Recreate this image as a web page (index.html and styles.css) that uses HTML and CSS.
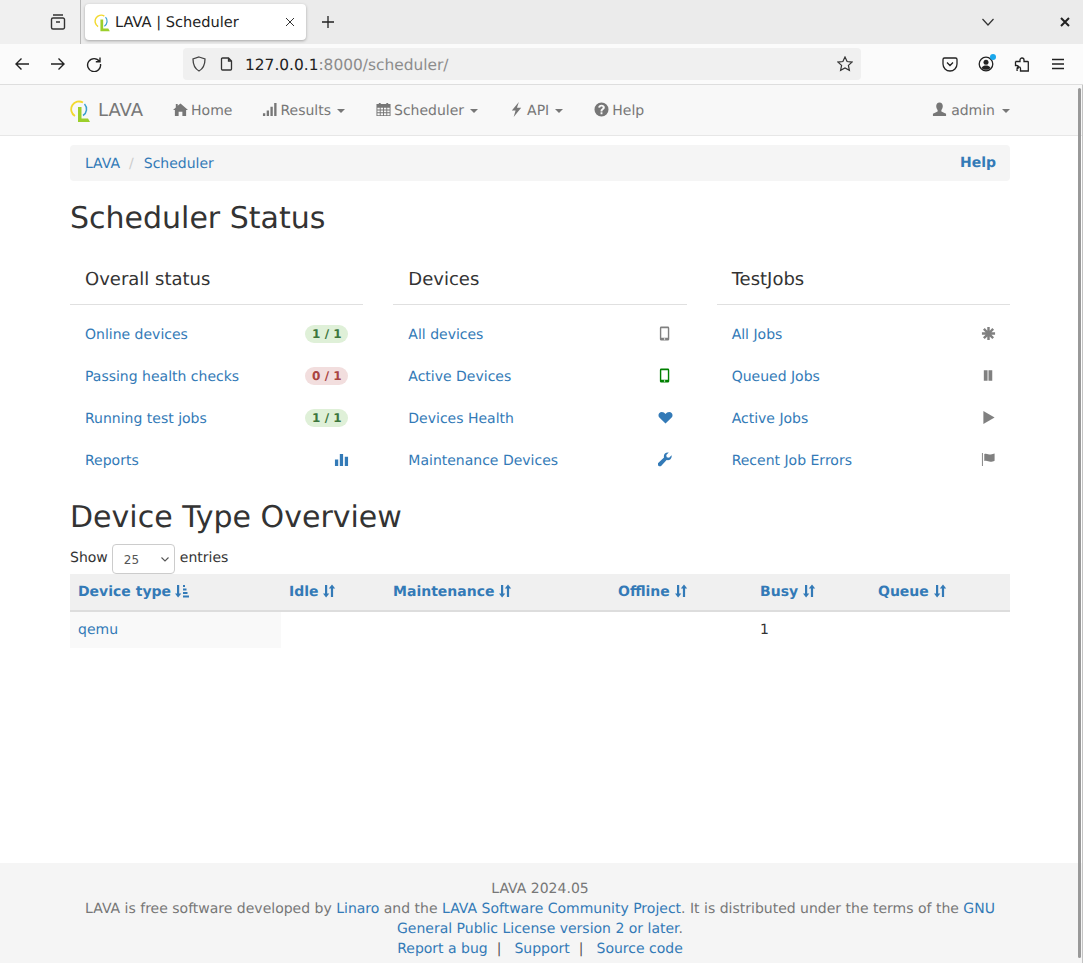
FILE: index.html
```html
<!DOCTYPE html>
<html lang="en">
<head>
  <meta charset="UTF-8" />
  <meta name="viewport" content="width=device-width, initial-scale=1.0"/>
  <title>LAVA | Scheduler</title>
  <link rel="stylesheet" href="styles.css">
</head>
<body>

  <svg class="sprite" width="0" height="0">
    <symbol id="i-logo" viewBox="0 0 20 23">
      <path d="M5 16A7.500 7.500 0 0 1 13 2.600" fill="none" stroke="#f2d92e" stroke-width="1.800"/>
      <path d="M14.500 4A7.500 7.500 0 0 1 13 15.500" fill="none" stroke="#39a0cf" stroke-width="1.500"/>
      <path d="M8 7H11.500V18.500H18L20 22H8z" fill="#9ccf2b"/>
    </symbol>
    <symbol id="i-home" viewBox="0 0 16 16"><path d="M8 1.500 16 8.500h-2V15h-4v-4.500H6V15H2V8.500H0L3 5.900V2h2v2.100z"/></symbol>
    <symbol id="i-signal" viewBox="0 0 16 16"><path d="M1 12h2.500v3H1zM5 9h2.500v6H5zM9 5h2.500v10H9zM13 1h2.500v14H13z"/></symbol>
    <symbol id="i-calendar" viewBox="0 0 16 16"><path d="M3 1h2v1h6V1h2v1h2.500v13H.5V2H3zM1.500 6v2h2.500V6zm3.500 0v2h2.500V6zm3.500 0v2H11V6zM12 6v2h2.500V6zM1.500 9v2h2.500V9zM5 9v2h2.500V9zm3.500 0v2H11V9zM12 9v2h2.500V9zm-10.500 3v2h2.500v-2zm3.500 0v2h2.500v-2zm3.500 0v2H11v-2zm3.500 0v2h2.500v-2z" fill-rule="evenodd"/></symbol>
    <symbol id="i-flash" viewBox="0 0 16 16"><path d="M10.500 0 3 9h4l-2 7 8-10H8.500z"/></symbol>
    <symbol id="i-question" viewBox="0 0 16 16"><path fill-rule="evenodd" d="M8 .5a7.500 7.500 0 1 1 0 15 7.500 7.500 0 0 1 0-15zM7 11v2h2v-2zM8 3C6 3 4.700 4 4.500 5.800l2 .3C6.700 5.300 7.200 4.900 8 4.900c.7 0 1.300.4 1.300 1 0 .5-.3.800-1 1.300C7.300 8 7 8.500 7 10h2c0-.9.200-1.200 1-1.800 1-.7 1.500-1.400 1.500-2.400C11.500 4.100 10 3 8 3z"/></symbol>
    <symbol id="i-user" viewBox="0 0 16 16"><path d="M8 .5c2.200 0 3.500 1.600 3.500 3.800 0 1.700-.7 3.200-1.500 4.200v1.500l5 2.500V15H1v-2.500l5-2.500V8.500C5.200 7.500 4.500 6 4.500 4.300 4.500 2.100 5.800.5 8 .5z"/></symbol>
    <symbol id="i-phone" viewBox="0 0 16 16"><path fill-rule="evenodd" d="M3.500.5h7A1.500 1.500 0 0 1 12 2v12a1.500 1.500 0 0 1-1.500 1.500h-7A1.500 1.500 0 0 1 2 14V2A1.500 1.500 0 0 1 3.500.5zM3.500 2.500v10h7v-10zM7 13a.8.800 0 1 0 0 1.600A.8.800 0 0 0 7 13z"/></symbol>
    <symbol id="i-heart" viewBox="0 0 16 16"><path d="M8 14.500 1.700 8.300C.9 7.500.5 6.500.5 5.500c0-2 1.500-3.500 3.500-3.500 1.700 0 3 .9 4 2.300C9 2.900 10.300 2 12 2c2 0 3.500 1.500 3.500 3.500 0 1-.4 2-1.200 2.800z"/></symbol>
    <symbol id="i-wrench" viewBox="0 0 16 16"><path d="M14.500 3.500c.3 1.500-.1 3-1.200 4.100-1.100 1.100-2.700 1.400-4.100 1L3.300 14.800c-.7.700-1.900.7-2.600 0l-.5-.5c-.7-.7-.7-1.900 0-2.600L6.400 5.800c-.4-1.400-.1-3 1-4.100C8.500.6 10 .2 11.500.5L8.800 3.200l.5 2.500 2.500.5z"/></symbol>
    <symbol id="i-asterisk" viewBox="0 0 16 16"><path d="M6.700 1h2.600v4l2.800-2.800L13.900 4l-2.800 2.700H15v2.600h-3.900l2.800 2.800-1.800 1.800-2.800-2.800V15H6.700v-3.900L4 13.900l-1.900-1.800 2.800-2.800H1V6.700h3.900L2.100 4 4 2.200l2.700 2.800z"/></symbol>
    <symbol id="i-pause" viewBox="0 0 16 16"><path d="M3 2.500h4v11H3zM8 2.500h4v11H8z"/></symbol>
    <symbol id="i-play" viewBox="0 0 16 16"><path d="M2.500 1 14.500 8l-12 7z"/></symbol>
    <symbol id="i-flag" viewBox="0 0 16 16"><path d="M1 1h1v14H1zM3.500 2c3-.9 4.500.9 7 .6 1.500-.1 2.700-.3 4-.9v7.500c-1.500.8-2.800 1-4.200 1.100-2.500.2-3.800-1.500-6.800-.6z"/></symbol>
    <symbol id="i-stats" viewBox="0 0 16 16"><path d="M1 8h3.500v7H1zM6.200 2h3.500v13H6.200zM11.500 5H15v10h-3.500z"/></symbol>
    <symbol id="i-sort" viewBox="0 0 14 14"><path d="M3 1h2.200v8.500H7.300L4.100 13.500 1 9.500H3zM10 .5 13.200 4.500H11.100V13H8.900V4.500H6.800z"/></symbol>
    <symbol id="i-sort-asc" viewBox="0 0 14 14"><path d="M2 1h2.200v8.500H6.300L3.100 13.500 0 9.500H2zM8 1h2v2H8zM8 4.500h3.500v2H8zM8 8h4.500v2H8zM8 11.500h6V13.500H8z"/></symbol>
  </svg>

  <div class="tabbar">
    <div class="tab-left">
      <svg class="bar-icon" width="18" height="18" viewBox="0 0 18 18" fill="none" stroke="#333" stroke-width="1.400"><path d="M4 2h10M2.500 6.500a1.500 1.500 0 0 1 1.500-1.500h10a1.500 1.500 0 0 1 1.500 1.500v8a1.500 1.500 0 0 1-1.500 1.500H4a1.500 1.500 0 0 1-1.500-1.500zM7 9h4"/></svg>
    </div>
    <div class="tab">
      <svg class="tab-favicon"><use href="#i-logo"/></svg>
      <span class="tab-title">LAVA | Scheduler</span>
      <svg class="tab-x" width="10" height="10" viewBox="0 0 10 10" stroke="#333" stroke-width="1"><path d="M1 1l8 8M9 1l-8 8"/></svg>
    </div>
    <svg class="tab-new" width="14" height="14" viewBox="0 0 14 14" stroke="#222" stroke-width="1.300"><path d="M7 1v12M1 7h12"/></svg>
    <div class="tabbar-space"></div>
    <svg class="tab-down" width="14" height="14" viewBox="0 0 14 14" fill="none" stroke="#333" stroke-width="1.200"><path d="M1.500 4 7 10l5.500-6"/></svg>
    <svg class="win-close" width="10" height="10" viewBox="0 0 10 10" stroke="#222" stroke-width="2"><path d="M1 1l8 8M9 1l-8 8"/></svg>
  </div>

  <div class="toolbar">
    <svg class="tool-btn" width="16" height="16" viewBox="0 0 16 16" fill="none" stroke="#222" stroke-width="1.400"><path d="M15 8H2M7.500 2.500 2 8l5.500 5.500"/></svg>
    <svg class="tool-btn" width="16" height="16" viewBox="0 0 16 16" fill="none" stroke="#222" stroke-width="1.400"><path d="M1 8h13M8.500 2.500 14 8l-5.500 5.500"/></svg>
    <svg class="tool-btn" width="16" height="16" viewBox="0 0 16 16" fill="none" stroke="#222" stroke-width="1.400"><path d="M13.500 5.500A6.500 6.500 0 1 0 14.500 8M14 1.500v4.200H9.800"/></svg>
    <div class="urlbar">
      <svg class="url-shield" width="16" height="16" viewBox="0 0 16 16" fill="none" stroke="#444" stroke-width="1.300"><path d="M8 1 14 3c0 6-1.500 9.500-6 12C3.500 12.500 2 9 2 3z"/></svg>
      <svg class="url-page" width="14" height="14" viewBox="0 0 14 14" fill="none" stroke="#333" stroke-width="1.300"><path d="M2.500 1h6l3 3v8a1 1 0 0 1-1 1h-8a1 1 0 0 1-1-1V2a1 1 0 0 1 1-1zM8.500 1v3h3"/></svg>
      <span class="url-text"><span class="url-host">127.0.0.1</span>:8000/scheduler/</span>
      <svg class="url-star" width="16" height="16" viewBox="0 0 16 16" fill="none" stroke="#333" stroke-width="1.200"><path d="M8 1l2.100 4.500 4.900.6-3.600 3.300 1 4.900L8 11.900l-4.400 2.400 1-4.900L1 6.100l4.900-.6z"/></svg>
    </div>
    <div class="tool-right">
      <svg width="16" height="16" viewBox="0 0 16 16" fill="none" stroke="#222" stroke-width="1.300"><path d="M2.500 2h11A1.500 1.500 0 0 1 15 3.500V8A7 7 0 0 1 1 8V3.500A1.500 1.500 0 0 1 2.500 2zM5 6.500 8 9.500l3-3"/></svg>
      <span class="account">
        <svg width="16" height="16" viewBox="0 0 16 16"><circle cx="8" cy="8" r="6.800" fill="none" stroke="#222" stroke-width="1.300"/><circle cx="8" cy="6.300" r="2.500" fill="#222"/><path d="M3.500 12c1-2 2.800-2.500 4.500-2.500s3.500.5 4.500 2.500c-1.200 1.200-2.800 1.800-4.500 1.800S4.700 13.200 3.500 12z" fill="#222"/></svg>
        <span class="account-dot"></span>
      </span>
      <svg width="16" height="16" viewBox="0 0 16 16" fill="none" stroke="#222" stroke-width="1.300"><path d="M1.500 5.500H6V4a2 2 0 1 1 4 0v1.500h3.500c.5 0 .8.300.8.800V15H6.500v-2.500a1.700 1.700 0 0 0-3.400 0V15M1.500 5.500v4h1.200a1.700 1.700 0 0 1 0 3.400"/></svg>
      <svg width="16" height="16" viewBox="0 0 16 16" stroke="#222" stroke-width="1.300"><path d="M2 3.500h12M2 8h12M2 12.500h12"/></svg>
    </div>
  </div>

  <div class="page">
    <nav class="navbar">
      <div class="container nav-inner">
        <a class="brand"><svg class="brand-logo"><use href="#i-logo"/></svg>LAVA</a>
        <a class="nav-link"><svg class="gi"><use href="#i-home"/></svg>Home</a>
        <a class="nav-link"><svg class="gi"><use href="#i-signal"/></svg>Results<span class="caret"></span></a>
        <a class="nav-link"><svg class="gi"><use href="#i-calendar"/></svg>Scheduler<span class="caret"></span></a>
        <a class="nav-link"><svg class="gi"><use href="#i-flash"/></svg>API<span class="caret"></span></a>
        <a class="nav-link"><svg class="gi"><use href="#i-question"/></svg>Help</a>
        <a class="nav-link nav-user"><svg class="gi"><use href="#i-user"/></svg>admin<span class="caret"></span></a>
      </div>
    </nav>

    <main class="container content">
      <div class="breadcrumb">
        <a>LAVA</a><span class="crumb-sep">/</span><a>Scheduler</a>
        <a class="crumb-help">Help</a>
      </div>

      <h1>Scheduler Status</h1>

      <div class="panels">
        <section class="panel">
          <h4>Overall status</h4>
          <a class="row">Online devices<span class="pill pill-ok">1 / 1</span></a>
          <a class="row">Passing health checks<span class="pill pill-bad">0 / 1</span></a>
          <a class="row">Running test jobs<span class="pill pill-ok">1 / 1</span></a>
          <a class="row">Reports<svg class="row-icon blue"><use href="#i-stats"/></svg></a>
        </section>
        <section class="panel">
          <h4>Devices</h4>
          <a class="row">All devices<svg class="row-icon gray"><use href="#i-phone"/></svg></a>
          <a class="row">Active Devices<svg class="row-icon green"><use href="#i-phone"/></svg></a>
          <a class="row">Devices Health<svg class="row-icon blue"><use href="#i-heart"/></svg></a>
          <a class="row">Maintenance Devices<svg class="row-icon blue"><use href="#i-wrench"/></svg></a>
        </section>
        <section class="panel">
          <h4>TestJobs</h4>
          <a class="row">All Jobs<svg class="row-icon gray"><use href="#i-asterisk"/></svg></a>
          <a class="row">Queued Jobs<svg class="row-icon gray"><use href="#i-pause"/></svg></a>
          <a class="row">Active Jobs<svg class="row-icon gray"><use href="#i-play"/></svg></a>
          <a class="row">Recent Job Errors<svg class="row-icon gray"><use href="#i-flag"/></svg></a>
        </section>
      </div>

      <h1 class="overview">Device Type Overview</h1>

      <div class="length">
        Show
        <span class="select-wrap">
          <select class="length-select"><option>25</option></select>
          <svg class="select-arrow" width="8" height="5" viewBox="0 0 8 5" fill="none" stroke="#555" stroke-width="1.100"><path d="M.5.500 4 4 7.500.500"/></svg>
        </span>
        entries
      </div>

      <table class="table">
        <colgroup>
          <col class="col-type"><col class="col-idle"><col class="col-maint"><col class="col-off"><col class="col-busy"><col class="col-queue">
        </colgroup>
        <thead>
          <tr>
            <th>Device type <svg class="sort"><use href="#i-sort-asc"/></svg></th>
            <th>Idle <svg class="sort"><use href="#i-sort"/></svg></th>
            <th>Maintenance <svg class="sort"><use href="#i-sort"/></svg></th>
            <th>Offline <svg class="sort"><use href="#i-sort"/></svg></th>
            <th>Busy <svg class="sort"><use href="#i-sort"/></svg></th>
            <th>Queue <svg class="sort"><use href="#i-sort"/></svg></th>
          </tr>
        </thead>
        <tbody>
          <tr>
            <td class="sorted"><a>qemu</a></td>
            <td></td>
            <td></td>
            <td></td>
            <td>1</td>
            <td></td>
          </tr>
        </tbody>
      </table>
    </main>

    <footer>
      <div class="container">
        LAVA 2024.05<br>
        LAVA is free software developed by <a>Linaro</a> and the <a>LAVA Software Community Project</a>. It is distributed under the terms of the <a>GNU General Public License version 2 or later</a>.<br>
        <a>Report a bug</a><span class="foot-sep">|</span><a>Support</a><span class="foot-sep">|</span><a>Source code</a>
      </div>
    </footer>

    <div class="scrollbar"></div>
  </div>

</body>
</html>
```

FILE: styles.css
```css
html, body {
  height: 100%;
}

body {
  margin: 0;
  height: 100vh;
  overflow: hidden;
  display: flex;
  flex-direction: column;
  background: #fff;
  color: #333;
  font-family: "DejaVu Sans", sans-serif;
  font-size: 14px;
  line-height: 20px;
  text-rendering: geometricPrecision;
}

a {
  color: #337ab7;
  text-decoration: none;
}

.sprite {
  position: absolute;
}

/* browser chrome */
.tabbar {
  height: 44px;
  flex: none;
  display: flex;
  align-items: center;
  background: #ebebeb;
}

.tab-left {
  width: 81px;
  height: 44px;
  flex: none;
  display: flex;
  align-items: center;
  justify-content: flex-end;
  padding-right: 13px;
  box-sizing: border-box;
  border-right: 1px solid #b8b8b8;
  background: #f0f0f0;
}

.tab {
  width: 221px;
  height: 36px;
  margin-left: 4px;
  margin-top: -1px;
  padding: 2px 11px 0 9px;
  box-sizing: border-box;
  display: flex;
  align-items: center;
  background: #fff;
  border-radius: 4px;
  box-shadow: 0 1px 3px rgba(0, 0, 0, 0.3);
  color: #222;
  font-size: 14.600px;
}

.tab-favicon {
  width: 16px;
  height: 18px;
  flex: none;
  margin-right: 5px;
}

.tab-x {
  margin-top: -2px;
}

.tab-title {
  flex: 1;
}

.tab-new {
  margin-left: 15px;
}

.tabbar-space {
  flex: 1;
}

.tab-down {
  margin-right: 65px;
}

.win-close {
  margin-right: 13px;
}

.toolbar {
  height: 40px;
  flex: none;
  display: flex;
  align-items: center;
  padding-left: 14px;
  background: #fbfbfb;
  border-bottom: 1px solid #dedede;
}

.tool-btn {
  margin-right: 20px;
  flex: none;
}

.urlbar {
  width: 678px;
  height: 32px;
  margin-left: 61px;
  padding: 0 8px;
  box-sizing: border-box;
  display: flex;
  align-items: center;
  background: #f0f0f0;
  border-radius: 4px;
  font-size: 15.400px;
  color: #8c8c8c;
}

.url-shield {
  margin-right: 13px;
}

.url-page {
  margin-right: 11px;
}

.url-text {
  flex: 1;
  padding-top: 1px;
}

.url-host {
  color: #222;
}

.tool-right {
  margin-left: 81px;
  display: flex;
  align-items: center;
  gap: 20px;
}

.account {
  position: relative;
  display: flex;
}

.account-dot {
  position: absolute;
  top: -2px;
  right: -2px;
  width: 6px;
  height: 6px;
  border-radius: 50%;
  background: #1aa7ec;
}

/* page */
.page {
  flex: 1;
  display: flex;
  flex-direction: column;
  position: relative;
  min-height: 0;
}

.container {
  width: 940px;
  margin: 0 auto;
  position: relative;
  left: -1.500px;
}

.navbar {
  height: 50px;
  flex: none;
  background: #f8f8f8;
  border-bottom: 1px solid #e7e7e7;
  box-sizing: content-box;
}

.nav-inner {
  height: 50px;
  padding-top: 2px;
  box-sizing: border-box;
  display: flex;
  align-items: center;
  color: #777;
}

.brand {
  display: flex;
  align-items: center;
  color: #777;
  font-size: 18px;
  margin-right: 30px;
}

.brand-logo {
  width: 20px;
  height: 23px;
  margin-right: 8px;
  margin-top: 1px;
}

.nav-link {
  display: flex;
  align-items: center;
  color: #777;
  margin-right: 30px;
}

.nav-user {
  margin-left: auto;
  margin-right: 0;
}

.gi {
  width: 15px;
  height: 15px;
  fill: #777;
  margin: -3px 3px 0 0;
  flex: none;
}

.nav-user .gi {
  margin-right: 4px;
}

.caret {
  width: 0;
  height: 0;
  margin: 0 1px 0 6px;
  border-top: 4px solid #777;
  border-left: 4px solid transparent;
  border-right: 4px solid transparent;
}

.nav-user .caret {
  margin: 0 0 0 7px;
}

.content {
  flex: 1;
  min-height: 0;
}

.breadcrumb {
  height: 36px;
  margin-top: 9px;
  padding: 2px 14px 0 15px;
  box-sizing: border-box;
  display: flex;
  align-items: center;
  background: #f5f5f5;
  border-radius: 4px;
}

.crumb-sep {
  color: #ccc;
  padding: 0 10px 0 9px;
}

.crumb-help {
  margin-left: auto;
  margin-bottom: 2px;
  font-weight: bold;
}

h1 {
  margin: 20px 0 0;
  padding-top: 1px;
  font-size: 30px;
  font-weight: 400;
  line-height: 33px;
}

.panels {
  display: grid;
  grid-template-columns: repeat(3, 1fr);
  gap: 30px;
  margin-top: 34px;
}

h4 {
  margin: 0 0 8px;
  padding: 1px 15px 14px;
  font-size: 18px;
  font-weight: 400;
  line-height: 20px;
  border-bottom: 1px solid #e0e0e0;
}

.row {
  height: 42px;
  padding: 2px 15px 0;
  box-sizing: border-box;
  display: flex;
  align-items: center;
  justify-content: space-between;
}

.pill {
  width: 43px;
  height: 18px;
  margin-top: -2px;
  border-radius: 9px;
  text-align: center;
  font-size: 12px;
  font-weight: bold;
  line-height: 18px;
}

.pill-ok {
  background: #dff0d8;
  color: #3c763d;
}

.pill-bad {
  background: #f2dede;
  color: #a94442;
}

.row-icon {
  width: 15px;
  height: 15px;
  flex: none;
  margin: -4px -1px 0 0;
}

.blue {
  fill: #337ab7;
}

.gray {
  fill: #808080;
}

.green {
  fill: #008000;
}

.overview {
  margin-top: 19px;
}

.length {
  height: 30px;
  margin-top: 10px;
  display: flex;
  align-items: flex-start;
  gap: 4px;
  line-height: 28px;
}

.select-wrap {
  position: relative;
  display: block;
  height: 30px;
  margin-right: 1px;
}

.length-select {
  display: block;
  width: 63px;
  height: 30px;
  padding: 2px 0 0 11px;
  appearance: none;
  font-family: inherit;
  font-size: 12px;
  color: #555;
  background: #fff;
  border: 1px solid #ccc;
  border-radius: 4px;
}

.select-arrow {
  position: absolute;
  top: 13px;
  right: 6px;
}

.table {
  width: 100%;
  table-layout: fixed;
  border-collapse: collapse;
}

.col-type { width: 211px; }
.col-idle { width: 104px; }
.col-maint { width: 225px; }
.col-off { width: 142px; }
.col-busy { width: 118px; }
.col-queue { width: 140px; }

th {
  height: 37px;
  padding: 7px 8px 8px;
  box-sizing: border-box;
  text-align: left;
  color: #337ab7;
  background: #f0f0f0;
  border-bottom: 2px solid #ddd;
  white-space: nowrap;
}

td {
  height: 36px;
  padding: 8px;
  box-sizing: border-box;
}

.sorted {
  background: #f9f9f9;
}

.sort {
  width: 14px;
  height: 14px;
  margin-left: -1px;
  fill: #337ab7;
  vertical-align: -2px;
}

footer {
  height: 100px;
  flex: none;
  box-sizing: border-box;
  padding-top: 16px;
  background: #f5f5f5;
  color: #777;
  text-align: center;
}

.foot-sep {
  color: #555;
  padding: 0 13px 0 9px;
}

.scrollbar {
  position: absolute;
  top: 3px;
  right: 2px;
  bottom: 5px;
  width: 3px;
  border-radius: 2px;
  background: #999;
}

.scrollbar::after {
  content: "";
  position: absolute;
  top: -3px;
  bottom: -5px;
  right: -2px;
  width: 1px;
  background: #c4c4c4;
}
```
